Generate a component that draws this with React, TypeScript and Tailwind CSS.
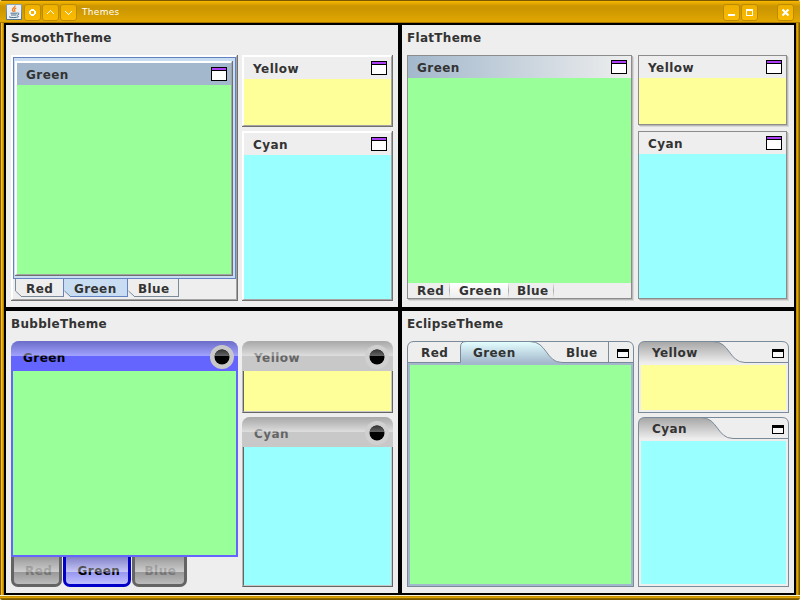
import type { ReactNode } from "react";

const FONT = "font-['DejaVu_Sans',sans-serif]";

function Label({ children, className = "tracking-[0.4px]" }: { children: ReactNode; className?: string }) {
  return (
    <span className={`block h-[14px] whitespace-pre text-[12px] font-bold leading-[14px] ${className}`}>
      {children}
    </span>
  );
}

/* ---------- window decoration ---------- */

function TitleButton({ children, className = "" }: { children: ReactNode; className?: string }) {
  return (
    <div
      className={`flex size-[17px] items-center justify-center rounded-[3px] border border-[#bd8b00] bg-gradient-to-b from-[#edb000] to-[#fbbb00] ${className}`}
    >
      <svg width="15" height="15" viewBox="0 0 15 15" fill="none" stroke="#fff" shapeRendering="crispEdges">
        {children}
      </svg>
    </div>
  );
}

function JavaIcon() {
  return (
    <svg width="16" height="16" viewBox="0 0 16 16" className="mr-[2px]">
      <defs>
        <linearGradient id="java" x1="0" y1="0" x2="0" y2="1">
          <stop offset="0" stopColor="#8da4b8" />
          <stop offset="1" stopColor="#50718c" />
        </linearGradient>
      </defs>
      <rect width="16" height="16" rx="1.5" fill="url(#java)" />
      <rect x="1" y="1" width="14" height="14" rx="0.5" fill="#edf0f2" />
      <path d="M9 1.500C9.600 3.500 6 4 6.400 6c.2.9.9 1.100 1 2M10.300 4C8.500 4.600 8 5.500 8.700 6.300c.4.5.1 1.100-.3 1.500" stroke="#ef7d22" strokeWidth="1.300" fill="none" />
      <path d="M4.500 9.200h6.500M5 11h5.500M11.300 9c2.300-.4 2 2-.3 2.300M3 12.800c2 1.100 7.500 1 9.700-.2" stroke="#47708f" strokeWidth="1" fill="none" />
    </svg>
  );
}

function TitleBar() {
  return (
    <div className="flex h-[23px] items-start border-b border-t border-b-[#a97700] border-t-[#7a5900] bg-[linear-gradient(180deg,#f9b900_0px,#e6aa00_2px,#cc9600_5px,#cb9600_8px,#dba200_17px,#e2a800_21px)] pl-[6px] pr-[6px] pt-[3px]">
      <JavaIcon />
      <TitleButton className="mr-px">
        <path d="M6 4.500h3M5 5.500h5M6 9.500h3M4 6.500h2M9 6.500h2M4 7.500h2M9 7.500h2M4 8.500h2M9 8.500h2M5 9.500h5M6 10.500h3" />
      </TitleButton>
      <TitleButton className="mr-px">
        <path d="M7 5.500h1M6 6.500h1M8 6.500h1M5 7.500h1M9 7.500h1M4 8.500h1M10 8.500h1" />
      </TitleButton>
      <TitleButton>
        <path d="M7 9.500h1M6 8.500h1M8 8.500h1M5 7.500h1M9 7.500h1M4 6.500h1M10 6.500h1" />
      </TitleButton>
      <span className="ml-[5px] mt-[3px] text-[9px] leading-[11px] tracking-[0.3px] text-white">Themes</span>
      <TitleButton className="ml-auto mr-px">
        <path d="M4 10h7" strokeWidth="2" />
      </TitleButton>
      <TitleButton className="mr-[19px]">
        <path d="M4 5h7" strokeWidth="2" />
        <path d="M4.500 5v6M10.500 5v6M4 10.500h7" />
      </TitleButton>
      <TitleButton>
        <path d="M4.500 4.500l6 6M10.500 4.500l-6 6" strokeWidth="2.200" shapeRendering="auto" />
      </TitleButton>
    </div>
  );
}

/* ---------- shared parts ---------- */

function Quadrant({ title, main, side }: { title: string; main: ReactNode; side: ReactNode }) {
  return (
    <section className="flex flex-col bg-[#eee] px-[5px] pb-[6px] pt-[6px] text-[#333]">
      <Label className="mb-[10px] tracking-[0.3px]">{title}</Label>
      <div className="flex flex-1 gap-1">
        <div className="flex h-[246px] w-[227px] flex-col">{main}</div>
        <div className="flex h-[246px] w-[151px] flex-col gap-1">{side}</div>
      </div>
    </section>
  );
}

function WindowIcon() {
  return (
    <div className="h-[14px] w-4 border border-black bg-white">
      <div className="h-[3px] border-b border-black bg-[#ac3ef4]" />
    </div>
  );
}

function Header({ title, className = "" }: { title: string; className?: string }) {
  return (
    <div className={`flex h-[22px] shrink-0 justify-between pl-[9px] pr-1 pt-1 ${className}`}>
      <Label className="mt-px tracking-[0.45px]">{title}</Label>
      <WindowIcon />
    </div>
  );
}

/* ---------- SmoothTheme ---------- */

function Bevel({ children, className = "" }: { children: ReactNode; className?: string }) {
  return (
    <div className={`flex flex-col border-b border-r border-[#707070] ${className}`}>
      <div className="flex flex-1 flex-col border-b border-l-2 border-r border-t-2 border-b-[#a4a4a4] border-l-white border-r-[#a4a4a4] border-t-white">
        {children}
      </div>
    </div>
  );
}

function SmoothTab({ label, width, selected = false, first = false, className }: { label: string; width: number; selected?: boolean; first?: boolean; className: string }) {
  const w = width;
  return (
    <div className="relative h-[18px]" style={{ width: w }}>
      <svg className="absolute inset-0" width={w} height="18" fill="none">
        <path d={`M0 0H${w}V18H6L0 12Z`} fill={selected ? "#c8ddf2" : "#eee"} />
        <path d="M.5 12L6.500 17.500" stroke="#7a8a99" />
        {first && <path d="M.5 0V12" stroke="#7a8a99" />}
        <path d={`M6 17.500H${w}`} stroke={selected ? "#6382bf" : "#7a8a99"} />
        <path d={`M${w - 0.5} 0V18`} stroke={selected || first ? "#6382bf" : "#7a8a99"} />
      </svg>
      <Label className={`relative pt-[3px] tracking-[0.4px] ${className}`}>{label}</Label>
    </div>
  );
}

function SmoothSide({ title, className, fill }: { title: string; className: string; fill: string }) {
  return (
    <Bevel className={className}>
      <Header title={title} />
      <div className={`flex-1 ${fill}`} />
    </Bevel>
  );
}

function Smooth() {
  return (
    <Quadrant
      title="SmoothTheme"
      main={
        <Bevel className="h-[246px]">
          <div className="flex h-[222px] border border-[#6382bf] bg-[#c8ddf2] pb-[2px] pl-px pr-[2px] pt-[3px]">
            <Bevel className="flex-1">
              <Header title="Green" className="bg-[#a3b8cc]" />
              <div className="flex-1 bg-[#9f9]" />
            </Bevel>
          </div>
          <div className="flex pl-[2px]">
            <SmoothTab label="Red" width={49} first className="pl-[11px]" />
            <SmoothTab label="Green" width={64} selected className="pl-[10px]" />
            <SmoothTab label="Blue" width={51} className="pl-[10px]" />
          </div>
        </Bevel>
      }
      side={
        <>
          <SmoothSide title="Yellow" className="h-[72px]" fill="bg-[#ff9]" />
          <SmoothSide title="Cyan" className="h-[170px]" fill="bg-[#9ff]" />
        </>
      }
    />
  );
}

/* ---------- FlatTheme ---------- */

function FlatFrame({ children, className = "" }: { children: ReactNode; className?: string }) {
  return (
    <div className={`flex flex-col pb-[2px] pr-[2px] ${className}`}>
      <div className="flex flex-1 flex-col border border-[#8c8c8c] shadow-[1px_1px_0_#b8b8b8,2px_2px_0_#d8d8d8]">{children}</div>
    </div>
  );
}

function FlatTab({ label, className = "" }: { label: string; className?: string }) {
  return (
    <div className={`flex h-[15px] ${className}`}>
      <Label className="pt-px tracking-[0.4px]">{label}</Label>
      <div className="ml-auto w-px bg-gradient-to-b from-[#eee] via-[#aaa] to-[#eee]" />
    </div>
  );
}

function Flat() {
  return (
    <Quadrant
      title="FlatTheme"
      main={
        <FlatFrame className="h-[246px]">
          <Header title="Green" className="bg-gradient-to-r from-[#a3b8cc] to-[#eee]" />
          <div className="flex-1 bg-[#9f9]" />
          <div className="flex">
            <FlatTab label="Red" className="w-[42px] pl-[9px]" />
            <FlatTab label="Green" className="w-[59px] bg-gradient-to-b from-white to-[#eee] pl-[9px]" />
            <FlatTab label="Blue" className="w-[45px] pl-2" />
          </div>
        </FlatFrame>
      }
      side={
        <>
          <FlatFrame className="h-[72px]">
            <Header title="Yellow" />
            <div className="flex-1 bg-[#ff9]" />
          </FlatFrame>
          <FlatFrame className="h-[170px]">
            <Header title="Cyan" />
            <div className="flex-1 bg-[#9ff]" />
          </FlatFrame>
        </>
      }
    />
  );
}

/* ---------- BubbleTheme ---------- */

function BubbleHeader({ title, active = false }: { title: string; active?: boolean }) {
  return (
    <div
      className={`relative flex h-[30px] shrink-0 justify-between overflow-hidden rounded-t-[8px] pl-3 pr-1 ${active ? "bg-[#6464ff] text-black" : "bg-[#c8c8c8] text-[#646464]"}`}
    >
      <Label className="mt-[10px] tracking-[0.45px]">{title}</Label>
      <div className="absolute inset-x-0 top-0 h-[15px] bg-gradient-to-b from-[#787878]/40 to-white/40" />
      <svg className="relative mt-[4px]" width="24" height="24" viewBox="0 0 24 24">
        <circle cx="12" cy="12" r="12" fill={active ? "#c8c8c8" : "#d0d0d0"} />
        <circle cx="12" cy="12" r="7.500" fill="#000" />
        <path d="M4.570 11a7.500 7.500 0 0 1 14.860 0z" fill="url(#gloss)" />
      </svg>
    </div>
  );
}

function BubbleTab({ label, active = false, className = "" }: { label: string; active?: boolean; className?: string }) {
  return (
    <div
      className={`relative h-[30px] overflow-hidden rounded-b-[7px] border-x-[3px] border-b-[3px] pt-[7px] ${active ? "border-[#0000c8] bg-[linear-gradient(180deg,#7878d2_0px,#a0a0f0_15px,#9696f0_15px,#c0c0ff_27px)] text-black" : "border-[#646464] bg-[linear-gradient(180deg,#989898_0px,#acacac_15px,#989898_15px,#bcbcbc_27px)] text-[#757575]"} ${className}`}
    >
      <Label className="tracking-[0.45px]">{label}</Label>
      <div className="absolute -inset-x-[3px] top-0 h-[15px] bg-gradient-to-b from-[#a0a0a0]/20 to-white/40" />
    </div>
  );
}

function BubbleSide({ title, className, fill }: { title: string; className: string; fill: string }) {
  return (
    <div className={`flex flex-col ${className}`}>
      <BubbleHeader title={title} />
      <div className="flex flex-1 border-b border-l border-r border-b-[#646464] border-l-[#b4b4b4] border-r-[#646464]">
        <div className={`flex-1 border-b border-l border-r border-b-[#c8c8c8] border-l-[#646464] border-r-[#c8c8c8] ${fill}`} />
      </div>
    </div>
  );
}

function Bubble() {
  return (
    <Quadrant
      title="BubbleTheme"
      main={
        <>
          <svg width="0" height="0" className="absolute">
            <linearGradient id="gloss" x1="0" y1="0" x2="0" y2="1">
              <stop offset="0" stopColor="#333" />
              <stop offset="1" stopColor="#666" />
            </linearGradient>
          </svg>
          <BubbleHeader title="Green" active />
          <div className="h-[186px] border-x-2 border-b-2 border-[#6464ff] bg-[#9f9]" />
          <div className="flex gap-px">
            <BubbleTab label="Red" className="w-[51px] pl-[11px]" />
            <BubbleTab label="Green" active className="w-[68px] pl-[11.5px]" />
            <BubbleTab label="Blue" className="w-[55px] pl-[9.5px]" />
          </div>
        </>
      }
      side={
        <>
          <BubbleSide title="Yellow" className="h-[72px]" fill="bg-[#ff9]" />
          <BubbleSide title="Cyan" className="h-[170px]" fill="bg-[#9ff]" />
        </>
      }
    />
  );
}

/* ---------- EclipseTheme ---------- */

function MaximizeIcon() {
  return <div className="h-[9px] w-3 border border-t-[3px] border-black bg-white/60" />;
}

function EclipseSide({ title, curve, className, fill }: { title: string; curve: number; className: string; fill: string }) {
  const shape = `C${curve + 17} .5 ${curve + 16} 21.500 ${curve + 32} 21.500`;
  return (
    <div className={`flex flex-col ${className}`}>
      <div className="relative flex h-[22px] items-start pl-[14px] pr-[5px]">
        <svg className="absolute inset-0" width="151" height="24" fill="none">
          <defs>
            <linearGradient id={`tab-${title}`} x1="0" y1="0" x2="0" y2="1">
              <stop offset="0" stopColor="#a6a6a6" />
              <stop offset="1" stopColor="#eee" />
            </linearGradient>
          </defs>
          <path d={`M.5 22V7Q.5 .5 7 .5H${curve} ${shape}Z`} fill={`url(#tab-${title})`} />
          <path d={`M.5 24V7Q.5 .5 7 .5H${curve} ${shape}H151`} stroke="#7a8a99" />
          <path d={`M${curve} .5H144Q150.500 .5 150.500 7V24`} stroke="#7a8a99" />
        </svg>
        <Label className="relative mt-[5px] tracking-[0.4px]">{title}</Label>
        <div className="relative ml-auto mt-2">
          <MaximizeIcon />
        </div>
      </div>
      <div className="flex flex-1 border-x border-b border-[#7a8a99] p-[2px]">
        <div className={`flex-1 ${fill}`} />
      </div>
    </div>
  );
}

function Eclipse() {
  return (
    <Quadrant
      title="EclipseTheme"
      main={
        <>
          <div className="relative flex h-[22px] shrink-0 items-start pr-[5px]">
            <svg className="absolute inset-0" width="227" height="22" fill="none">
              <defs>
                <linearGradient id="tab-active" x1="0" y1="0" x2="0" y2="1">
                  <stop offset="0" stopColor="#e4ffff" />
                  <stop offset="1" stopColor="#a3b8cc" />
                </linearGradient>
              </defs>
              <path d="M53.500 22V6Q53.500 .5 59 .5H123C140 .5 139 21.500 155 21.500V22Z" fill="url(#tab-active)" />
              <path d="M.5 22V7Q.5 .5 7 .5H220Q226.500 .5 226.500 7V22M0 21.500H53.500V6Q53.500 .5 59 .5H123C140 .5 139 21.500 155 21.500H227M201.500 0V22" stroke="#7a8a99" />
            </svg>
            <Label className="relative ml-[14px] mt-[5px] w-[52px] tracking-[0.4px]">Red</Label>
            <Label className="relative mt-[5px] w-[93px] tracking-[0.4px]">Green</Label>
            <Label className="relative mt-[5px] tracking-[0.4px]">Blue</Label>
            <div className="relative ml-auto mt-2">
              <MaximizeIcon />
            </div>
          </div>
          <div className="flex flex-1 border-x border-b border-[#7a8a99] bg-[#a3b8cc] p-[2px]">
            <div className="flex-1 bg-[#9f9]" />
          </div>
        </>
      }
      side={
        <>
          <EclipseSide title="Yellow" curve={75} className="h-[72px]" fill="bg-[#ff9]" />
          <EclipseSide title="Cyan" curve={63} className="h-[170px]" fill="bg-[#9ff]" />
        </>
      }
    />
  );
}

export default function App() {
  return (
    <div className={`h-[600px] w-[800px] overflow-hidden bg-white ${FONT}`}>
      <div className="flex h-[600px] flex-col overflow-hidden rounded-[2px]">
        <TitleBar />
        <div className="flex h-[572px] bg-black">
          <div className="w-1 bg-[linear-gradient(90deg,#7a5900_1px,#ffbf1a_1px_2px,#e3a600_2px_3px,#b88600_3px)]" />
          <div className="grid flex-1 grid-cols-2 grid-rows-2 gap-1 bg-black p-[2px]">
            <Smooth />
            <Flat />
            <Bubble />
            <Eclipse />
          </div>
          <div className="w-1 bg-[linear-gradient(90deg,#c89200_1px,#dfa400_1px_2px,#a97a00_2px_3px,#7a5900_3px)]" />
        </div>
        <div className="h-[5px] bg-[linear-gradient(180deg,#fff4d0_1px,#c89200_1px_2px,#dfa400_2px_3px,#8f6800_3px_4px,#7a5900_4px)]" />
      </div>
    </div>
  );
}
